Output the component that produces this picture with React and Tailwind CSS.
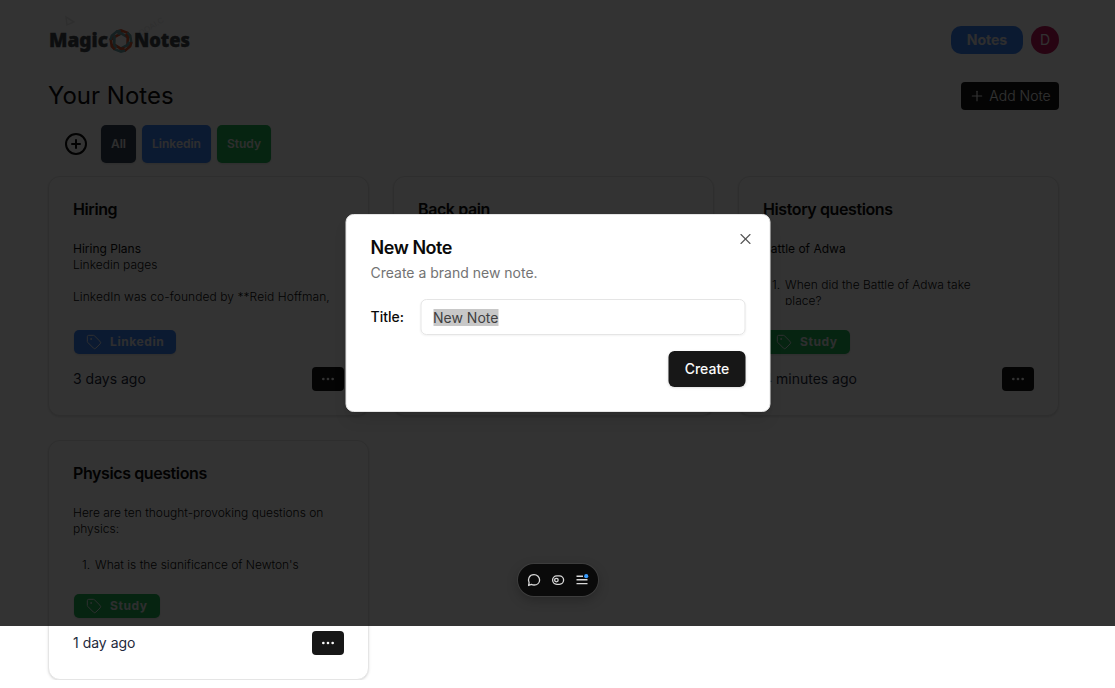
import React from "react";
import { CirclePlus, Plus, Tag, Ellipsis, X } from "lucide-react";

function Logo() {
  return (
    <svg width="162" height="56" viewBox="0 0 162 56" className="block" aria-label="MagicNotes">
      <g fill="none" stroke="#e6e6e6" strokeWidth="1.5">
        <path d="M18 5 L19 13 L26 10 Z" />
        <text x="93" y="24" transform="rotate(-32 93 24)" fontFamily="'Liberation Sans', sans-serif" fontSize="8" fill="#e6e6e6" stroke="none">
          DOAI.C
        </text>
      </g>
      <g fontFamily="'Noto Sans', sans-serif" fontWeight="900" fontSize="19.5" fill="#42464a" stroke="#42464a" strokeWidth="0.4">
        <text x="1" y="35" textLength="59" lengthAdjust="spacingAndGlyphs">Magic</text>
        <text x="86" y="35" textLength="56" lengthAdjust="spacingAndGlyphs">Notes</text>
      </g>
      <g transform="translate(73 29)" fill="none" strokeWidth="2.6" strokeLinejoin="miter">
        {[0, 60, 120, 180, 240, 300].map((a, i) => (
          <path
            key={a}
            transform={`rotate(${a})`}
            d="M-8.2 -0.6 L-6.6 -4 L1.6 -8.4 M-4.2 -9.6 L0 -10.6 L6.4 -8.2 L8.4 -5"
            stroke={i % 2 === 0 ? "#d9542f" : "#6a9fa3"}
          />
        ))}
      </g>
    </svg>
  );
}

const tone = { blue: "bg-[#3b82f6]", green: "bg-[#1fb455]" };

function NoteCard({ title, tag, color, ago, children }) {
  return (
    <article className="flex h-60 flex-col rounded-xl border border-[#e5e5e5] bg-white px-6 shadow-sm">
      <h3 className="mt-[22px] text-base leading-5 font-semibold tracking-tight text-[#0a0a0a]">{title}</h3>
      <div className="mt-[22px] h-[64px] overflow-hidden text-xs leading-4 font-light text-[#0a0a0a]">{children}</div>
      <div className="mt-6 flex h-[26px] items-center">
        {tag && (
          <span className={`ml-px flex h-6 items-center gap-2 rounded-[5px] px-3 text-xs font-bold tracking-[0.6px] text-[#e5e7eb] shadow-sm ${tone[color]}`}>
            <Tag size={16} strokeWidth={1.5} />
            {tag}
          </span>
        )}
      </div>
      <div className="mt-3 flex items-center justify-between">
        <span className="text-sm font-normal text-[#1e293b]">{ago}</span>
        <span className="flex h-6 w-8 items-center justify-center rounded bg-[#171717] text-[#fafafa]">
          <Ellipsis size={16} strokeWidth={2} />
        </span>
      </div>
    </article>
  );
}

function Chip({ className, children }) {
  return (
    <span className={`flex h-[38px] items-center rounded-[5px] text-xs font-semibold text-[#e5e5e5] shadow-sm ${className}`}>
      {children}
    </span>
  );
}

function Dialog() {
  return (
    <div role="dialog" className="relative flex w-[425px] translate-x-[0.5px] flex-col gap-4 rounded-lg border border-[#e5e5e5] bg-white p-6 text-[#0a0a0a] shadow-lg">
      <div className="flex flex-col gap-1.5">
        <h2 className="text-lg leading-none font-semibold tracking-tight">New Note</h2>
        <p className="text-sm text-[#737373]">Create a brand new note.</p>
      </div>
      <div className="flex items-center gap-4">
        <label className="w-[33.5px] text-sm leading-none font-medium whitespace-nowrap">Title:</label>
        <div className="flex h-9 flex-1 items-center rounded-md border border-[#e5e5e5] px-3 text-sm shadow-xs">
          <span className="mt-px bg-[#c8c8c8] leading-[17px] text-[#404040]">New Note</span>
        </div>
      </div>
      <div className="flex justify-end">
        <button className="h-9 w-[77px] rounded-md bg-[#171717] text-sm font-medium text-[#fafafa] shadow-sm">Create</button>
      </div>
      <X size={18} strokeWidth={1.5} className="absolute top-[15px] right-[15px] text-[#525252]" />
    </div>
  );
}

function Toolbar() {
  return (
    <div className="absolute top-[564px] left-[518px] flex h-8 w-20 items-center justify-center gap-2 rounded-full bg-[#0a0a0a] text-[#d8d8d8] shadow-[0_0_0_1px_#3d3d3d,0_4px_12px_rgba(0,0,0,0.25)]">
      <svg width="16" height="16" viewBox="0 0 16 16" fill="none" stroke="currentColor" strokeWidth="1.3">
        <path d="M2.6 13.5 L3.1 10.8 C1.4 7.4 3.1 2.7 8 2.7 C11.2 2.7 13.6 5 13.6 7.9 C13.6 11 11.2 13 8.1 13 C6.8 13 6 12.7 5.4 12.4 Z" strokeLinejoin="round" />
      </svg>
      <svg width="16" height="16" viewBox="0 0 16 16" fill="none" stroke="currentColor" strokeWidth="1.3">
        <rect x="2.6" y="3.9" width="11" height="8.4" rx="4.2" />
        <circle cx="6.4" cy="8.1" r="1.8" />
      </svg>
      <svg width="16" height="16" viewBox="0 0 16 16" fill="none" stroke="currentColor" strokeWidth="1.4">
        <path d="M2.5 4.3 H9 M2.5 7.8 H13.5 M2.5 11.6 H13.5" />
        <circle cx="12.2" cy="4.2" r="2.1" fill="#3b9eff" stroke="none" />
      </svg>
    </div>
  );
}

export default function App() {
  return (
    <div className="relative h-[688px] w-[1115px] overflow-hidden bg-white font-['Inter',sans-serif] text-[#0a0a0a]">
      <div className="h-[680px] w-[1107px] overflow-hidden px-12">
        <header className="flex h-[54px] items-center justify-between pt-[26px]">
          <Logo />
          <div className="flex gap-2">
            <span className="flex h-7 w-[72px] items-center justify-center rounded-[10px] bg-[#3b82f6] text-sm font-bold text-[#e5e5e5]">Notes</span>
            <span className="flex size-7 items-center justify-center rounded-full bg-[#c2185b] text-sm text-[#f5f5f5]">D</span>
          </div>
        </header>

        <div className="mt-7 flex h-7 items-center justify-between">
          <h1 className="text-2xl leading-7 font-normal">Your Notes</h1>
          <span className="flex h-7 w-[98px] items-center justify-center gap-1 rounded bg-[#171717] text-sm font-light text-[#fafafa]">
            <Plus size={16} strokeWidth={1.75} />
            Add Note
          </span>
        </div>

        <div className="mt-[15px] flex h-[38px] items-center pl-4">
          <CirclePlus size={24} strokeWidth={2} />
          <div className="ml-[13px] flex gap-1.5">
            <Chip className="w-[35px] justify-center bg-[#334155]">All</Chip>
            <Chip className={`w-[69px] justify-center ${tone.blue}`}>Linkedin</Chip>
            <Chip className={`w-[54px] justify-center ${tone.green}`}>Study</Chip>
          </div>
        </div>

        <main className="mt-[13px] grid grid-cols-3 gap-6">
          <NoteCard title="Hiring" tag="Linkedin" color="blue" ago="3 days ago">
            <p className="font-normal">Hiring Plans</p>
            <p>Linkedin pages</p>
            <p className="mt-4 tracking-[0.07px] whitespace-nowrap">LinkedIn was co-founded by **Reid Hoffman,</p>
          </NoteCard>
          <NoteCard title="Back pain" ago="" />
          <NoteCard title="History questions" tag="Study" color="green" ago="4 minutes ago">
            <p className="font-normal">Battle of Adwa</p>
            <div className="mt-5 flex gap-[5px] pl-[9px]">
              <span>1.</span>
              <p className="w-[200px] tracking-[0.02px]">When did the Battle of Adwa take place?</p>
            </div>
          </NoteCard>
          <NoteCard title="Physics questions" tag="Study" color="green" ago="1 day ago">
            <p>Here are ten thought-provoking questions on physics:</p>
            <div className="mt-5 flex gap-[5px] pl-[9px]">
              <span>1.</span>
              <p className="whitespace-nowrap">What is the significance of Newton's</p>
            </div>
          </NoteCard>
        </main>
      </div>

      <div className="absolute inset-x-0 top-0 flex h-[626px] items-center justify-center bg-black/80">
        <Dialog />
      </div>
      <Toolbar />
    </div>
  );
}
